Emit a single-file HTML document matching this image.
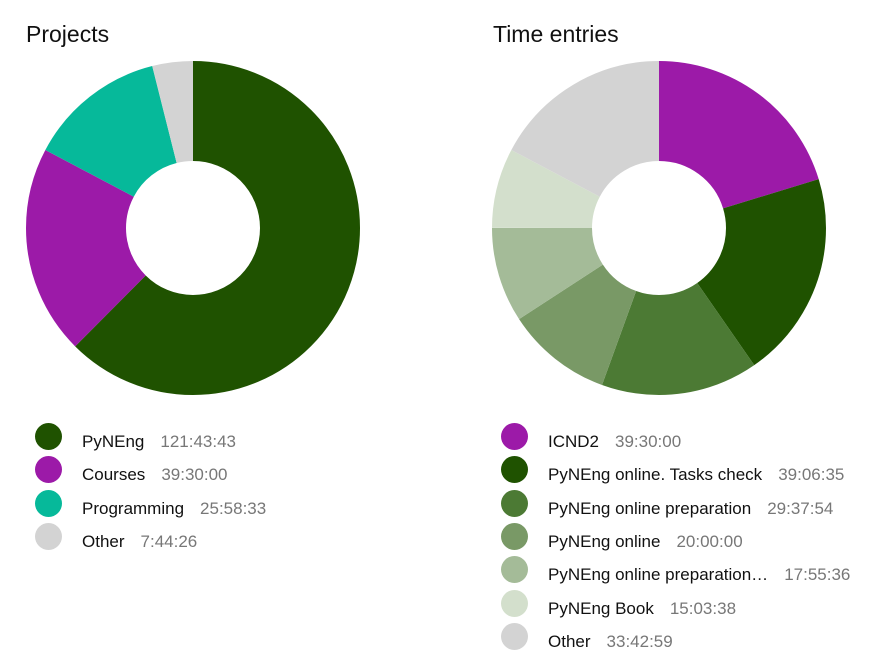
<!DOCTYPE html>
<html><head><meta charset="utf-8"><style>
body{margin:0;width:872px;height:672px;background:#fff;font-family:"Liberation Sans",sans-serif;position:relative;overflow:hidden}
h2{position:absolute;margin:0;font-weight:normal;font-size:23px;color:#111;top:21px}
.leg{position:absolute;font-size:17px;color:#111}
.row{position:absolute;height:30px;white-space:nowrap}
.dot{position:absolute;left:0;top:0;width:27px;height:27px;border-radius:50%}
.row span.t{position:absolute;left:47px;top:9px}
.row span.v{color:#777;margin-left:16px}
</style></head><body>
<h2 style="left:26px">Projects</h2>
<h2 style="left:493px">Time entries</h2>
<svg width="872" height="400" style="position:absolute;left:0;top:0">
<g transform="translate(193,228) rotate(-90)" fill="none" stroke-width="100">
<circle r="117" stroke="#1f5200" stroke-dasharray="459.04 735.13" stroke-dashoffset="0"/>
<circle r="117" stroke="#9c1aa8" stroke-dasharray="148.95 735.13" stroke-dashoffset="-459.04"/>
<circle r="117" stroke="#06b99a" stroke-dasharray="97.96 735.13" stroke-dashoffset="-607.99"/>
<circle r="117" stroke="#d3d3d3" stroke-dasharray="29.19 735.13" stroke-dashoffset="-705.95"/>
</g>
<g transform="translate(659,228) rotate(-90)" fill="none" stroke-width="100">
<circle r="117" stroke="#9c1aa8" stroke-dasharray="148.95 735.13" stroke-dashoffset="0"/>
<circle r="117" stroke="#1f5200" stroke-dasharray="147.48 735.13" stroke-dashoffset="-148.95"/>
<circle r="117" stroke="#4c7a34" stroke-dasharray="111.74 735.13" stroke-dashoffset="-296.43"/>
<circle r="117" stroke="#799966" stroke-dasharray="75.42 735.13" stroke-dashoffset="-408.17"/>
<circle r="117" stroke="#a4bb98" stroke-dasharray="67.60 735.13" stroke-dashoffset="-483.59"/>
<circle r="117" stroke="#d3dfcc" stroke-dasharray="56.80 735.13" stroke-dashoffset="-551.19"/>
<circle r="117" stroke="#d3d3d3" stroke-dasharray="127.14 735.13" stroke-dashoffset="-607.99"/>
</g>
</svg>
<div class="leg" style="left:35px;top:423px">
<div class="row" style="top:0"><div class="dot" style="background:#1f5200"></div><span class="t">PyNEng<span class="v">121:43:43</span></span></div>
<div class="row" style="top:33.3px"><div class="dot" style="background:#9c1aa8"></div><span class="t">Courses<span class="v">39:30:00</span></span></div>
<div class="row" style="top:66.6px"><div class="dot" style="background:#06b99a"></div><span class="t">Programming<span class="v">25:58:33</span></span></div>
<div class="row" style="top:99.9px"><div class="dot" style="background:#d3d3d3"></div><span class="t">Other<span class="v">7:44:26</span></span></div>
</div>
<div class="leg" style="left:501px;top:423px">
<div class="row" style="top:0"><div class="dot" style="background:#9c1aa8"></div><span class="t">ICND2<span class="v">39:30:00</span></span></div>
<div class="row" style="top:33.3px"><div class="dot" style="background:#1f5200"></div><span class="t">PyNEng online. Tasks check<span class="v">39:06:35</span></span></div>
<div class="row" style="top:66.6px"><div class="dot" style="background:#4c7a34"></div><span class="t">PyNEng online preparation<span class="v">29:37:54</span></span></div>
<div class="row" style="top:99.9px"><div class="dot" style="background:#799966"></div><span class="t">PyNEng online<span class="v">20:00:00</span></span></div>
<div class="row" style="top:133.2px"><div class="dot" style="background:#a4bb98"></div><span class="t">PyNEng online preparation…<span class="v">17:55:36</span></span></div>
<div class="row" style="top:166.5px"><div class="dot" style="background:#d3dfcc"></div><span class="t">PyNEng Book<span class="v">15:03:38</span></span></div>
<div class="row" style="top:199.8px"><div class="dot" style="background:#d3d3d3"></div><span class="t">Other<span class="v">33:42:59</span></span></div>
</div>
</body></html>
